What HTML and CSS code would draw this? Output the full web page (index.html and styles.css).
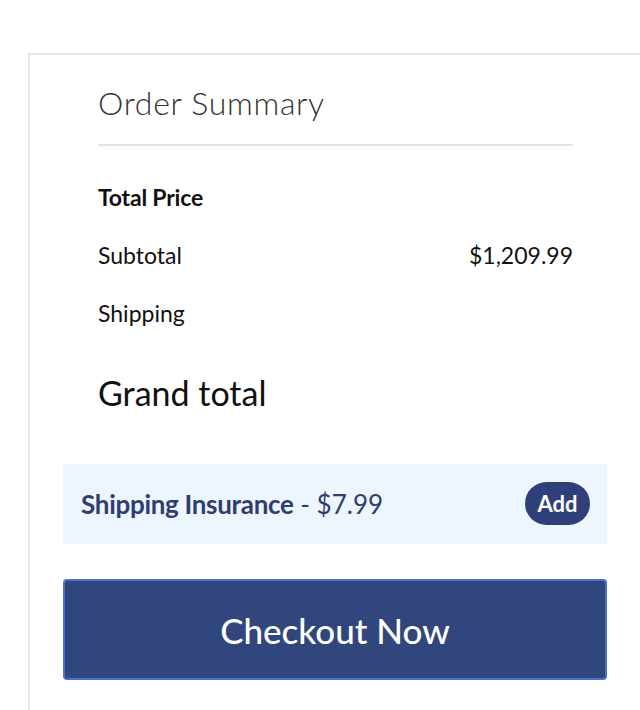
FILE: index.html
```html
<!DOCTYPE html>
<html>
<head>
<meta charset="utf-8">
<link rel="stylesheet" href="styles.css">
</head>
<body>
<div class="card">
  <div class="inner">
    <h2 class="title">Order Summary</h2>
    <div class="rows">
      <div class="row head">Total Price</div>
      <div class="row"><span>Subtotal</span><span>$1,209.99</span></div>
      <div class="row"><span>Shipping</span><span></span></div>
      <div class="row grand">Grand total</div>
    </div>
  </div>
  <div class="insurance">
    <span class="ins-text"><b>Shipping Insurance</b> - $7.99</span>
    <button class="add">Add</button>
  </div>
  <button class="checkout">Checkout Now</button>
</div>
</body>
</html>
```
FILE: styles.css
```css
html, body {
  margin: 0;
  padding: 0;
  background: #fff;
  overflow: hidden;
}
body {
  font-family: Lato, "Liberation Sans", sans-serif;
  color: #111;
  width: 640px;
  height: 710px;
}
.card {
  margin: 53px 0 0 28px;
  width: 613px;
  height: 657px;
  border-top: 2px solid #e6e6e6;
  border-left: 2px solid #e6e6e6;
  box-sizing: border-box;
  padding: 0 34px 0 33px;
}
.inner {
  padding: 0 34px 0 35px;
}
.title {
  margin: 0;
  font-weight: 300;
  font-size: 32px;
  letter-spacing: 0.7px;
  color: #333;
  height: 89px;
  line-height: 96px;
  border-bottom: 2px solid #e3e3e3;
}
.rows {
  display: flex;
  flex-direction: column;
}
.row {
  display: flex;
  justify-content: space-between;
  font-size: 23px;
  height: 58px;
  align-items: center;
}
.row.head {
  font-weight: 700;
  margin-top: 22px;
  height: 58px;
  letter-spacing: -0.2px;
}
.row.grand {
  font-size: 34px;
  height: 80px;
  padding-top: 20px;
  box-sizing: border-box;
}
.insurance {
  margin-top: 42px;
  height: 80px;
  background: #edf5ff;
  display: flex;
  align-items: center;
  justify-content: space-between;
  padding: 0 17px 0 18px;
  color: #2f3e6e;
  font-size: 26px;
}
.ins-text b {
  font-weight: 700;
  letter-spacing: -0.3px;
}
.add {
  background: #2e3f7a;
  color: #fff;
  border: none;
  border-radius: 22px;
  font-family: Lato, "Liberation Sans", sans-serif;
  font-weight: 700;
  font-size: 22px;
  width: 65px;
  height: 43px;
  padding: 0;
  margin-top: -2px;
}
.checkout {
  display: block;
  margin-top: 35px;
  width: 100%;
  height: 101px;
  background: #32467e;
  border: 2px solid #4b6fcf;
  border-radius: 4px;
  color: #fff;
  font-family: Lato, "Liberation Sans", sans-serif;
  font-size: 35px;
  font-weight: 500;
}
```
